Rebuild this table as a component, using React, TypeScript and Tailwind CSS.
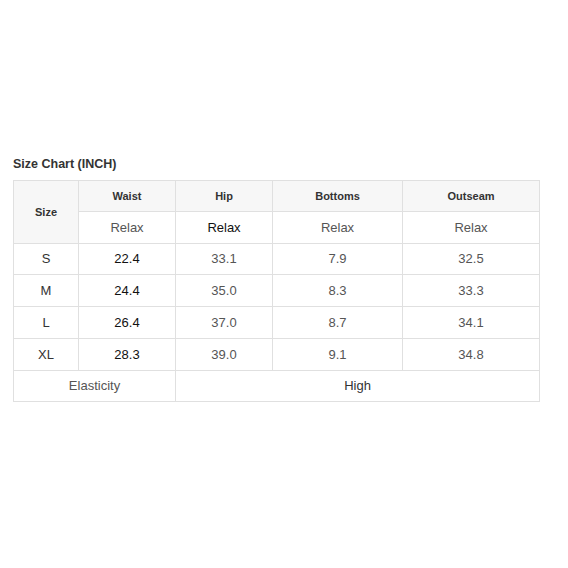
const headers = ["Waist", "Hip", "Bottoms", "Outseam"];

const rows = [
  { size: "S", h: "h-[31px]", values: ["22.4", "33.1", "7.9", "32.5"] },
  { size: "M", h: "h-[32px]", values: ["24.4", "35.0", "8.3", "33.3"] },
  { size: "L", h: "h-[32px]", values: ["26.4", "37.0", "8.7", "34.1"] },
  { size: "XL", h: "h-[32px]", values: ["28.3", "39.0", "9.1", "34.8"] },
];

const cell = "border border-[#e0e0e0] text-center align-middle p-0";

export default function App() {
  return (
    <div
      className="min-h-[568px] w-[568px] bg-white pt-[156px] px-[13px]"
      style={{ fontFamily: '"Liberation Sans", Arial, sans-serif' }}
    >
      {/* Title */}
      <h2 className="text-[12.5px] leading-[16px] font-bold text-[#333] mb-[8px]">Size Chart (INCH)</h2>

      {/* Table */}
      <table className="border-collapse w-[526px] table-fixed">
        <colgroup>
          <col className="w-[65px]" />
          <col className="w-[97px]" />
          <col className="w-[97px]" />
          <col className="w-[130px]" />
          <col className="w-[137px]" />
        </colgroup>
        <tbody>
          <tr className="h-[31px] bg-[#f7f7f7]">
            <td rowSpan={2} className={`${cell} text-[11px] font-bold text-[#333]`}>
              Size
            </td>
            {headers.map((h) => (
              <td key={h} className={`${cell} text-[11px] font-bold text-[#333]`}>
                {h}
              </td>
            ))}
          </tr>
          <tr className="h-[32px]">
            {headers.map((h, i) => (
              <td
                key={h}
                className={`${cell} text-[13px] bg-white ${i === 1 ? "text-[#111]" : "text-[#555]"}`}
              >
                Relax
              </td>
            ))}
          </tr>
          {rows.map((r) => (
            <tr key={r.size} className={r.h}>
              <td className={`${cell} text-[13px] text-[#333]`}>{r.size}</td>
              {r.values.map((v, i) => (
                <td
                  key={i}
                  className={`${cell} text-[13px] ${i === 0 ? "text-[#111]" : "text-[#555]"}`}
                >
                  {v}
                </td>
              ))}
            </tr>
          ))}
          <tr className="h-[31px]">
            <td colSpan={2} className={`${cell} text-[13px] text-[#555]`}>
              Elasticity
            </td>
            <td colSpan={3} className={`${cell} text-[13px] text-[#333]`}>
              High
            </td>
          </tr>
        </tbody>
      </table>
    </div>
  );
}
